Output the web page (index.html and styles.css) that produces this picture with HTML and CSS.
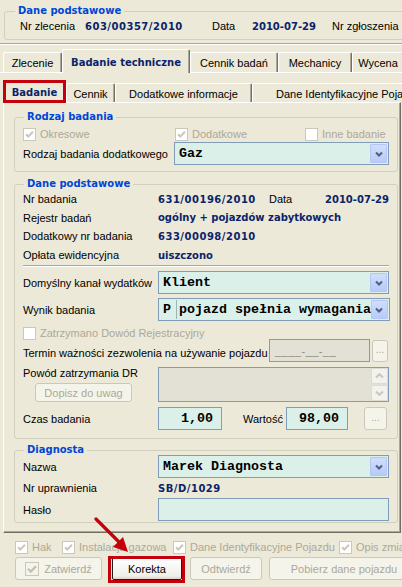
FILE: index.html
```html
<!DOCTYPE html>
<html lang="pl">
<head>
<meta charset="utf-8">
<title>Badanie techniczne</title>
<link rel="stylesheet" href="styles.css">
</head>
<body>
<fieldset class="grp top-grp">
  <legend>Dane podstawowe</legend>
  <div class="row-top">
    <span class="t-l1">Nr zlecenia</span>
    <span class="val num t-v1">603/00357/2010</span>
    <span class="t-l2">Data</span>
    <span class="val t-v2">2010-07-29</span>
    <span class="t-l3">Nr zgłoszenia</span>
  </div>
</fieldset>
<div class="sep"></div>

<div class="tabs tabs1">
  <div class="tab w-zl">Zlecenie</div>
  <div class="tab sel w-bt">Badanie techniczne</div>
  <div class="tab w-cb">Cennik badań</div>
  <div class="tab w-me">Mechanicy</div>
  <div class="tab w-wy">Wycena</div>
</div>

<div class="panel1">
  <div class="tabs tabs2">
    <div class="tab sel w-ba">Badanie</div>
    <div class="tab w-ce">Cennik</div>
    <div class="tab w-di">Dodatkowe informacje</div>
    <div class="tab w-dip">Dane Identyfikacyjne Pojazdu</div>
  </div>

  <div class="panel2">
    <fieldset class="grp g-rodzaj">
      <legend>Rodzaj badania</legend>
      <div class="row cbrow">
        <span class="cbitem cb-a dis"><svg class="cb" width="13" height="13" viewBox="0 0 13 13"><rect x=".5" y=".5" width="12" height="12" fill="#fff" stroke="#CAC8BB"/><polyline points="3,6.2 5.3,8.5 10,3.8" fill="none" stroke="#CAC8BB" stroke-width="2"/></svg>Okresowe</span>
        <span class="cbitem cb-b dis"><svg class="cb" width="13" height="13" viewBox="0 0 13 13"><rect x=".5" y=".5" width="12" height="12" fill="#fff" stroke="#CAC8BB"/><polyline points="3,6.2 5.3,8.5 10,3.8" fill="none" stroke="#CAC8BB" stroke-width="2"/></svg>Dodatkowe</span>
        <span class="cbitem dis"><svg class="cb" width="13" height="13" viewBox="0 0 13 13"><rect x=".5" y=".5" width="12" height="12" fill="#fff" stroke="#CAC8BB"/></svg>Inne badanie</span>
      </div>
      <div class="row r-combo-a">
        <span class="lbl lw-rodzaj">Rodzaj badania dodatkowego</span>
        <div class="combo c-fill"><span class="ctext">Gaz</span><span class="cbtn"><svg width="8" height="6" viewBox="0 0 8 6"><polyline points="1,1.5 4,4.5 7,1.5" fill="none" stroke="#4D6185" stroke-width="2"/></svg></span></div>
      </div>
    </fieldset>

    <fieldset class="grp g-dane">
      <legend>Dane podstawowe</legend>
      <div class="row ir h18"><span class="lbl">Nr badania</span><span class="val num dv1">631/00196/2010</span><span class="lbl-data">Data</span><span class="val dv2">2010-07-29</span></div>
      <div class="row ir h19"><span class="lbl">Rejestr badań</span><span class="val">ogólny + pojazdów zabytkowych</span></div>
      <div class="row ir h18"><span class="lbl">Dodatkowy nr badania</span><span class="val num">633/00098/2010</span></div>
      <div class="row ir h20"><span class="lbl">Opłata ewidencyjna</span><span class="val">uiszczono</span></div>
      <div class="hsep"></div>
      <div class="row r-combo-b">
        <span class="lbl">Domyślny kanał wydatków</span>
        <div class="combo c-fill"><span class="ctext">Klient</span><span class="cbtn"><svg width="8" height="6" viewBox="0 0 8 6"><polyline points="1,1.5 4,4.5 7,1.5" fill="none" stroke="#4D6185" stroke-width="2"/></svg></span></div>
      </div>
      <div class="row r-combo-c">
        <span class="lbl">Wynik badania</span>
        <div class="combo c-fill"><span class="ctext ccode">P</span><span class="ctext cdesc">pojazd spełnia wymagania</span><span class="cbtn"><svg width="8" height="6" viewBox="0 0 8 6"><polyline points="1,1.5 4,4.5 7,1.5" fill="none" stroke="#4D6185" stroke-width="2"/></svg></span></div>
      </div>
      <div class="row r-zatrz">
        <span class="cbitem dis"><svg class="cb" width="13" height="13" viewBox="0 0 13 13"><rect x=".5" y=".5" width="12" height="12" fill="#fff" stroke="#CAC8BB"/></svg>Zatrzymano Dowód Rejestracyjny</span>
      </div>
      <div class="row r-termin">
        <span class="lbl-long">Termin ważności zezwolenia na używanie pojazdu</span>
        <div class="box box-dis datebox">____-__-__</div>
        <div class="xbtn dots dots-s">...</div>
      </div>
      <div class="row r-memo">
        <div class="memo-left">
          <span class="lbl">Powód zatrzymania DR</span>
          <div class="xbtn dopisz">Dopisz do uwag</div>
        </div>
        <div class="box box-dis memo">
          <div class="sbar">
            <span class="sbtn"><svg width="9" height="6" viewBox="0 0 9 6"><polyline points="1,4.5 4.5,1.2 8,4.5" fill="none" stroke="#CAC8BB" stroke-width="2"/></svg></span>
            <span class="sbtn"><svg width="9" height="6" viewBox="0 0 9 6"><polyline points="1,1.5 4.5,4.8 8,1.5" fill="none" stroke="#CAC8BB" stroke-width="2"/></svg></span>
          </div>
        </div>
      </div>
      <div class="row r-czas">
        <span class="lbl">Czas badania</span>
        <div class="box box-num czas">1,00</div>
        <span class="lbl-wart">Wartość</span>
        <div class="box box-num wart">98,00</div>
        <div class="xbtn dots dots-l">...</div>
      </div>
    </fieldset>

    <fieldset class="grp g-diag">
      <legend>Diagnosta</legend>
      <div class="row r-combo-d">
        <span class="lbl">Nazwa</span>
        <div class="combo c-fill"><span class="ctext">Marek Diagnosta</span><span class="cbtn"><svg width="8" height="6" viewBox="0 0 8 6"><polyline points="1,1.5 4,4.5 7,1.5" fill="none" stroke="#4D6185" stroke-width="2"/></svg></span></div>
      </div>
      <div class="row ir h20"><span class="lbl">Nr uprawnienia</span><span class="val num">SB/D/1029</span></div>
      <div class="row r-haslo">
        <span class="lbl">Hasło</span>
        <div class="box box-edit c-fill"></div>
      </div>
    </fieldset>
  </div>

  <div class="bottom-cbs">
    <span class="cbitem dis bc1"><svg class="cb" width="13" height="13" viewBox="0 0 13 13"><rect x=".5" y=".5" width="12" height="12" fill="#fff" stroke="#CAC8BB"/><polyline points="3,6.2 5.3,8.5 10,3.8" fill="none" stroke="#CAC8BB" stroke-width="2"/></svg>Hak</span>
    <span class="cbitem dis bc2"><svg class="cb" width="13" height="13" viewBox="0 0 13 13"><rect x=".5" y=".5" width="12" height="12" fill="#fff" stroke="#CAC8BB"/><polyline points="3,6.2 5.3,8.5 10,3.8" fill="none" stroke="#CAC8BB" stroke-width="2"/></svg>Instalacja gazowa</span>
    <span class="cbitem dis bc3"><svg class="cb" width="13" height="13" viewBox="0 0 13 13"><rect x=".5" y=".5" width="12" height="12" fill="#fff" stroke="#CAC8BB"/><polyline points="3,6.2 5.3,8.5 10,3.8" fill="none" stroke="#CAC8BB" stroke-width="2"/></svg>Dane Identyfikacyjne Pojazdu</span>
    <span class="cbitem dis bc4"><svg class="cb" width="13" height="13" viewBox="0 0 13 13"><rect x=".5" y=".5" width="12" height="12" fill="#fff" stroke="#CAC8BB"/><polyline points="3,6.2 5.3,8.5 10,3.8" fill="none" stroke="#CAC8BB" stroke-width="2"/></svg>Opis zmian</span>
  </div>

  <div class="btnrow">
    <div class="xbtn bb b-zatw"><svg width="14" height="14" viewBox="0 0 14 14"><rect x=".5" y=".5" width="13" height="13" fill="#F5F4EA" stroke="#CAC8BB"/><polyline points="3,6.8 5.8,9.6 11,4.2" fill="none" stroke="#C2C0B3" stroke-width="2.2"/></svg>Zatwierdź</div>
    <div class="xbtn bb b-kor">Korekta</div>
    <div class="xbtn bb b-odt">Odtwierdź</div>
    <div class="xbtn bb b-pob">Pobierz dane pojazdu</div>
  </div>
</div>

<div class="hl hl-tab"></div>
<div class="hl hl-btn"></div>
<svg class="arrow" width="50" height="50" viewBox="0 0 50 50">
  <line x1="3" y1="2" x2="28" y2="27" stroke="#C4000C" stroke-width="3.2" stroke-linecap="round"/>
  <polygon points="35,35 20,30 30,20" fill="#C4000C"/>
</svg>
</body>
</html>
```

FILE: styles.css
```css
* { box-sizing: border-box; }
html, body { margin: 0; padding: 0; }
body {
  width: 402px; height: 587px; overflow: hidden; position: relative;
  padding-top: 5px;
  background: #ECE9D8;
  font-family: "Liberation Sans", Arial, sans-serif; font-size: 11px; color: #000;
}
svg { display: block; }

/* group boxes */
.grp {
  margin: 0; padding: 0 8px; min-width: 0;
  border: 1px solid #D0D0BF; border-radius: 3px;
}
.grp > legend {
  font-family: "DejaVu Sans", sans-serif; font-weight: bold; font-size: 10px;
  line-height: 12px; color: #0046D5; padding: 0 3px; margin-left: 1px;
}
.val {
  font-family: "DejaVu Sans", sans-serif; font-weight: bold; font-size: 10px; color: #0A246A;
  white-space: nowrap;
}
.num { letter-spacing: 0.5px; }

/* top group */
.top-grp { margin-left: 4px; width: 430px; padding: 0 15px 4px; }
.top-grp > legend { margin-left: -5px; }
.row-top { display: flex; align-items: center; height: 18px; white-space: nowrap; }
.t-l1 { width: 65px; }
.t-v1 { width: 127px; }
.t-l2 { width: 40px; }
.t-v2 { width: 80px; }

.sep { margin-top: 3px; height: 2px; border-top: 1px solid #ACA899; border-bottom: 1px solid #fff; }

/* tabs */
.tabs { display: flex; align-items: flex-end; white-space: nowrap; position: relative; z-index: 1; }
.tabs1 { height: 27px; padding-left: 3px; }
.tabs2 { height: 29px; padding-left: 3px; }
.tab {
  flex: none; display: flex; align-items: center; justify-content: center;
  height: 20px; padding-top: 1px;
  border-top: 1px solid #fff; border-left: 1px solid #fff; border-right: 1px solid #716F64;
  box-shadow: inset -1px 0 #ACA899;
  border-radius: 2px 2px 0 0;
  background: #ECE9D8;
}
.tabs2 .tab { height: 19px; }
.tab.sel {
  font-family: "DejaVu Sans", sans-serif; font-weight: bold; font-size: 10px; color: #0A246A;
  height: 24px; margin-bottom: -1px;
}
.tabs2 .tab.sel { height: 23px; }
.w-zl { width: 59px; }
.w-bt { width: 128px; }
.w-cb { width: 88px; }
.w-me { width: 74px; }
.w-wy { width: 52px; }
.w-ba { width: 63px; }
.w-ce { width: 49px; }
.w-di { width: 137px; }
.w-dip { width: 170px; justify-content: flex-start; padding-left: 23px; }

.panel1 { border-top: 1px solid #fff; }

.panel2 {
  margin-left: 3px; width: 398px;
  border: 1px solid #fff; border-right-color: #716F64; border-bottom-color: #716F64;
  box-shadow: inset -1px -1px #ACA899;
  padding: 0 2px 9px 10px;
}

.row { display: flex; align-items: center; white-space: nowrap; }
.lbl { width: 135px; flex: none; }
.h18 { height: 18px; }
.h19 { height: 19px; }
.h20 { height: 20px; }

/* checkboxes */
.cbitem { display: inline-flex; align-items: center; gap: 4px; flex: none; }
.cbitem.dis { color: #ACA899; }

/* Rodzaj */
.g-rodzaj { margin-top: 8px; padding-bottom: 6px; }
.cbrow { height: 14px; margin-top: 4px; }
.cb-a { width: 152px; }
.cb-b { width: 130px; }
.r-combo-a { height: 23px; margin-top: 1px; }
.lw-rodzaj { width: 151px; flex: none; }

/* combos */
.combo {
  flex: 1; height: 23px; display: flex; align-items: center;
  border: 1px solid #7F9DB9; padding: 1px; position: relative;
}
.c-fill { background: #DCF0EA; }
.ctext {
  font-family: "Liberation Mono", "Courier New", monospace; font-weight: bold; font-size: 13.33px;
  padding-left: 3px; flex: 1; overflow: hidden;
}
.ccode { flex: none; width: 17px; border-right: 1px solid #9BB5B0; height: 19px; line-height: 19px; }
.cdesc { padding-left: 2px; }
.cbtn {
  flex: none; width: 17px; height: 19px; display: flex; align-items: center; justify-content: center;
  background: linear-gradient(#D1DDFB, #B8CBF7);
  border: 1px solid #B4C6F5; border-radius: 1px;
}

/* Dane group */
.g-dane { margin-top: 6px; padding-bottom: 8px; }
.dv1 { width: 111px; }
.lbl-data { width: 56px; flex: none; }
.hsep { height: 2px; border-top: 1px solid #ACA899; border-bottom: 1px solid #fff; }
.r-combo-b { height: 23px; margin-top: 4px; }
.r-combo-c { height: 23px; margin-top: 4px; }
.r-zatrz { height: 18px; padding-top: 6px; }
.r-termin { height: 23px; }
.lbl-long { width: 246px; flex: none; padding-top: 4px; }
.box { border: 1px solid #7F9DB9; height: 23px; flex: none; }
.box-dis { background: #E3E0D6; }
.datebox {
  width: 101px; color: #8E8B80; font-family: "Liberation Sans", sans-serif; font-size: 11px;
  display: flex; align-items: center; padding-left: 5px; letter-spacing: 0.5px;
}
.xbtn {
  border: 1px solid #CAC8BB; border-radius: 3px; background: #F5F4EA; color: #ACA899;
  display: flex; align-items: center; justify-content: center; flex: none;
}
.dots { height: 22px; font-size: 10px; padding-bottom: 3px; }
.dots-s { width: 16px; margin-left: 2px; }
.r-memo { height: 35px; margin-top: 5px; align-items: stretch; }
.memo-left { width: 135px; flex: none; display: flex; flex-direction: column; justify-content: space-between; }
.memo-left .lbl { line-height: 12px; }
.dopisz { width: 97px; height: 19px; margin-left: 12px; font-size: 11px; }
.memo { flex: 1; height: 35px; position: relative; display: flex; justify-content: flex-end; }
.sbar { width: 17px; display: flex; flex-direction: column; gap: 1px; padding: 0; }
.sbtn {
  flex: 1; display: flex; align-items: center; justify-content: center;
  background: #F3F2EC; border: 1px solid #DEDCD2; border-radius: 2px;
}
.r-czas { height: 23px; margin-top: 5px; }
.box-num {
  background: #DCF0EA; display: flex; align-items: center; justify-content: flex-end; padding-right: 8px;
  font-family: "Liberation Mono", monospace; font-weight: bold; font-size: 13.33px;
}
.czas { width: 64px; }
.lbl-wart { width: 64px; flex: none; padding-left: 21px; }
.wart { width: 62px; }
.dots-l { width: 23px; height: 23px; margin-left: 16px; }

/* Diagnosta */
.g-diag { margin-top: 5px; padding-bottom: 1px; }
.r-combo-d { height: 23px; margin-top: -1px; }
.r-haslo { height: 23px; }
.box-edit { flex: 1; }

/* bottom */
.bottom-cbs { display: flex; align-items: center; height: 14px; margin-top: 7px; padding-left: 15px; white-space: nowrap; }
.bc1 { width: 47px; }
.bc2 { width: 111px; }
.bc3 { width: 166px; }
.btnrow { display: flex; height: 23px; margin-top: 3px; padding-left: 15px; }
.bb { height: 23px; font-size: 11px; }
.b-zatw { width: 87px; gap: 5px; }
.b-kor {
  width: 70px; margin-left: 10px; color: #000;
  border-color: #1F1F1F; border-radius: 2px;
  background: linear-gradient(#FFFFFF, #F0EFEA 85%, #D8D5CB);
}
.b-odt { width: 72px; margin-left: 8px; }
.b-pob { width: 150px; margin-left: 7px; }

/* annotations */
.hl { position: absolute; z-index: 5; border: 3px solid #C4000C; }
.hl-tab { left: 3px; top: 80px; width: 63px; height: 23px; }
.hl-btn { left: 108px; top: 556px; width: 77px; height: 27px; }
.arrow { position: absolute; z-index: 5; left: 93px; top: 517px; }
```
